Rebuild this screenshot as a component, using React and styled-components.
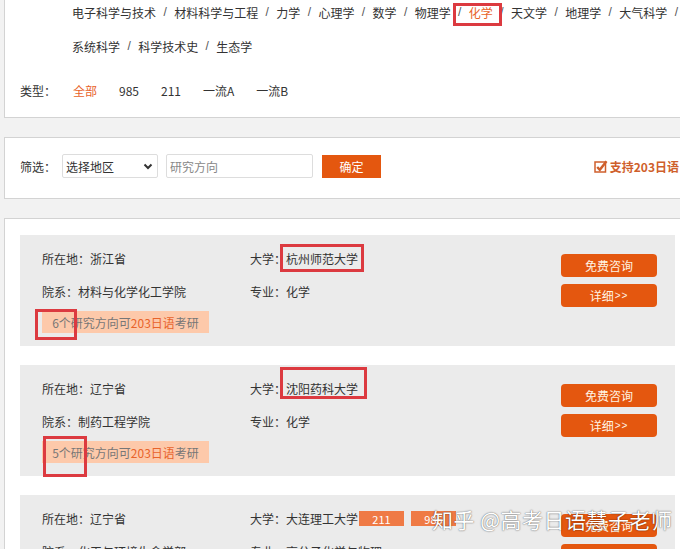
import React from 'react';
import styled, { createGlobalStyle } from 'styled-components';

const ORANGE = '#e4570f';
const TEXT_ORANGE = '#e8632a';

const Global = createGlobalStyle`
  html, body { margin: 0; padding: 0; }
  body {
    background: #f2f2f2;
    font-family: "Noto Sans CJK SC", "Microsoft YaHei", sans-serif;
    font-size: 12px;
    color: #333;
    overflow: hidden;
  }
  * { box-sizing: border-box; }
`;

const Page = styled.div`
  position: relative;
  width: 700px;
  padding-left: 4px;
  display: flex;
  flex-direction: column;
  gap: 19px;
`;

const Panel = styled.div`
  background: #fff;
  border: 1px solid #d3d3d3;
`;

const TopPanel = styled(Panel)`
  border-top: none;
  margin-top: -5px;
  padding: 0 0 10px 15px;
`;

const SubjectRow = styled.div`
  display: flex;
  align-items: center;
  height: 34px;
  margin-left: 52px;
  white-space: nowrap;
`;

const Subject = styled.span`
  color: ${p => (p.$active ? TEXT_ORANGE : '#333')};
`;

const Slash = styled.span`
  color: #555;
  margin: 0 7.4px;
  font-family: "Liberation Sans", sans-serif;
`;

const TypeRow = styled.div`
  display: flex;
  align-items: center;
  height: 34px;
  margin-top: 10px;
`;

const Label = styled.span`
  width: ${p => p.$w || 36}px;
  flex: none;
`;

const TypeItem = styled.span`
  margin-right: 22px;
  color: ${p => (p.$active ? TEXT_ORANGE : '#333')};
`;

const FilterPanel = styled(Panel)`
  display: flex;
  align-items: center;
  padding: 16px 20px 20px 15px;
`;

const Select = styled.div`
  width: 96px;
  height: 24px;
  margin-left: 6px;
  border: 1px solid #ddd;
  border-radius: 2px;
  display: flex;
  align-items: center;
  justify-content: space-between;
  padding: 0 4px 0 3px;
  color: #333;
`;

const Input = styled.div`
  width: 147px;
  height: 24px;
  margin-left: 8px;
  border: 1px solid #ddd;
  border-radius: 2px;
  display: flex;
  align-items: center;
  padding-left: 3px;
  color: #888;
`;

const Confirm = styled.div`
  width: 59px;
  height: 23px;
  margin-left: 9px;
  background: ${ORANGE};
  color: #fff;
  display: flex;
  align-items: center;
  justify-content: center;
`;

const Support = styled.div`
  margin-left: auto;
  display: flex;
  align-items: center;
  gap: 2px;
  color: #cf5f2c;
  font-weight: bold;
  white-space: nowrap;
`;

const ResultPanel = styled(Panel)`
  border-right: none;
  padding: 16px 0 40px 15px;
  display: flex;
  flex-direction: column;
  gap: 19px;
`;

const Card = styled.div`
  position: relative;
  width: 655px;
  height: 111px;
  background: #ebebeb;
  display: flex;
  padding: 7px 18px 0 22px;
`;

const Info = styled.div`
  flex: 1;
  display: grid;
  grid-template-columns: 208px 1fr;
  grid-auto-rows: 33px;
  align-content: start;
`;

const Cell = styled.div`
  display: flex;
  align-items: center;
  white-space: nowrap;
`;

const Badge = styled.div`
  grid-column: 1 / span 2;
  justify-self: start;
  margin-top: 3px;
  width: 167px;
  height: 22px;
  background: #fdc9aa;
  color: #777;
  display: flex;
  align-items: center;
  justify-content: center;
`;

const Hi = styled.span`
  color: ${TEXT_ORANGE};
`;

const Tag = styled.span`
  width: 45px;
  height: 15px;
  margin-left: ${p => p.$ml}px;
  background: #ef7a45;
  color: #fff;
  font-size: 11px;
  display: inline-flex;
  align-items: center;
  justify-content: center;
`;

const Actions = styled.div`
  display: flex;
  flex-direction: column;
  gap: 7px;
  padding-top: 12px;
  width: 96px;
`;

const ActionButton = styled.div`
  height: 23px;
  border-radius: 4px;
  background: ${ORANGE};
  color: #fff4e4;
  display: flex;
  align-items: center;
  justify-content: center;
`;

const Arrows = styled.span`
  font-size: 10px;
  letter-spacing: 1px;
  margin-left: 1px;
  font-family: "Liberation Sans", sans-serif;
`;

const Mark = styled.div`
  position: absolute;
  left: ${p => p.$x}px;
  top: ${p => p.$y}px;
  width: ${p => p.$w}px;
  height: ${p => p.$h}px;
  border: 3px solid #dc3a40;
  pointer-events: none;
`;

const Watermark = styled.div`
  position: absolute;
  left: 432px;
  top: 504px;
  font-size: 21px;
  color: #fff;
  white-space: nowrap;
  text-shadow: 0 0 1px rgba(0,0,0,0.55), 0 0 2px rgba(0,0,0,0.35);
  letter-spacing: 0.5px;
`;

const row1 = ['电子科学与技术', '材料科学与工程', '力学', '心理学', '数学', '物理学', '化学', '天文学', '地理学', '大气科学'];
const row2 = ['系统科学', '科学技术史', '生态学'];

const SubjectLine = ({ items, trailing }) => (
  <SubjectRow>
    {items.map((s, i) => (
      <React.Fragment key={s}>
        {i > 0 && <Slash>/</Slash>}
        <Subject $active={s === '化学'}>{s}</Subject>
      </React.Fragment>
    ))}
    {trailing && <Slash>/</Slash>}
  </SubjectRow>
);

const Chevron = () => (
  <svg width="10" height="7" viewBox="0 0 10 7">
    <polyline points="1.5,1.5 5,5 8.5,1.5" fill="none" stroke="#333" strokeWidth="2" />
  </svg>
);

const CheckIcon = () => (
  <svg width="14" height="13" viewBox="0 0 14 13">
    <rect x="1" y="2" width="10.5" height="10" fill="none" stroke="#cf5f2c" strokeWidth="1.5" />
    <polyline points="3.2,7 5.8,9.8 12.5,1.2" fill="none" stroke="#cf5f2c" strokeWidth="2.4" />
  </svg>
);

const cards = [
  {
    loc: '浙江省', univ: '杭州师范大学', dept: '材料与化学化工学院', major: '化学', n: 6,
    marks: [{ x: 260, y: 9, w: 84, h: 28 }, { x: 15, y: 74, w: 42, h: 31 }],
  },
  {
    loc: '辽宁省', univ: '沈阳药科大学', dept: '制药工程学院', major: '化学', n: 5,
    marks: [{ x: 260, y: 2, w: 87, h: 32 }, { x: 23, y: 71, w: 44, h: 41 }],
  },
  {
    loc: '辽宁省', univ: '大连理工大学', dept: '化工与环境生命学部', major: '高分子化学与物理', n: 4,
    tags: ['211', '985'], marks: [],
  },
];

export default function App() {
  return (
    <>
      <Global />
      <Page>
        <TopPanel>
          <SubjectLine items={row1} trailing />
          <SubjectLine items={row2} />
          <TypeRow>
            <Label $w={53}>类型：</Label>
            <TypeItem $active>全部</TypeItem>
            <TypeItem>985</TypeItem>
            <TypeItem>211</TypeItem>
            <TypeItem>一流A</TypeItem>
            <TypeItem>一流B</TypeItem>
          </TypeRow>
        </TopPanel>

        <FilterPanel>
          <Label>筛选：</Label>
          <Select>
            <span>选择地区</span>
            <Chevron />
          </Select>
          <Input>研究方向</Input>
          <Confirm>确定</Confirm>
          <Support>
            <CheckIcon />
            <span>支持203日语</span>
          </Support>
        </FilterPanel>

        <ResultPanel>
          {cards.map((c, i) => (
            <Card key={i}>
              <Info>
                <Cell>所在地：{c.loc}</Cell>
                <Cell>
                  大学：{c.univ}
                  {c.tags && c.tags.map((t, j) => <Tag key={t} $ml={j === 0 ? 1 : 7}>{t}</Tag>)}
                </Cell>
                <Cell>院系：{c.dept}</Cell>
                <Cell>专业：{c.major}</Cell>
                <Badge>
                  {c.n}个研究方向可<Hi>203日语</Hi>考研
                </Badge>
              </Info>
              <Actions>
                <ActionButton>免费咨询</ActionButton>
                <ActionButton>详细<Arrows>&gt;&gt;</Arrows></ActionButton>
              </Actions>
              {c.marks.map((m, j) => (
                <Mark key={j} $x={m.x} $y={m.y} $w={m.w} $h={m.h} />
              ))}
            </Card>
          ))}
        </ResultPanel>

        <Mark $x={453} $y={3} $w={49} $h={23} />
        <Watermark>知乎 @高考日语慧子老师</Watermark>
      </Page>
    </>
  );
}
